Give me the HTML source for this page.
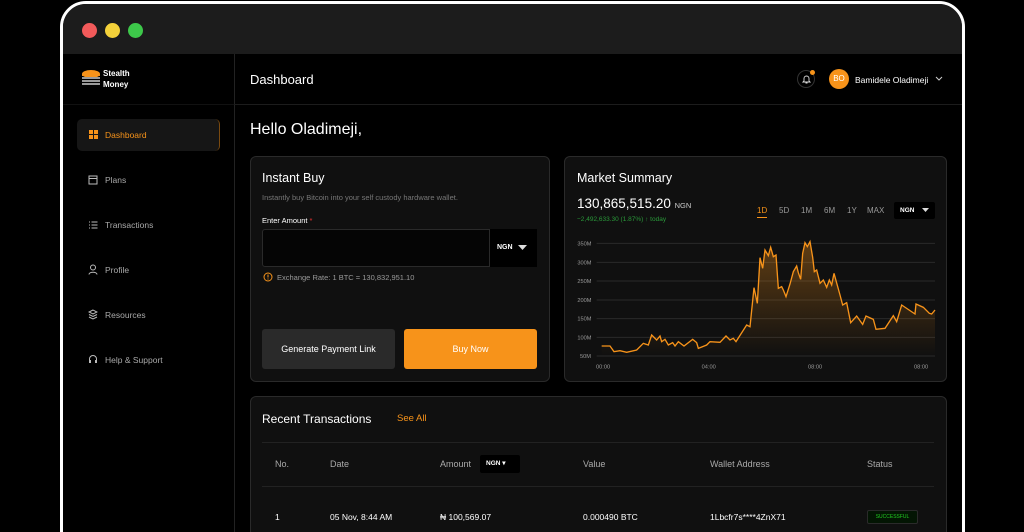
<!DOCTYPE html>
<html style="width:1024px;height:532px;overflow:hidden"><head><meta charset="utf-8"><style>
*{margin:0;padding:0;box-sizing:border-box}
body{width:1024px;height:532px;background:#000;overflow:hidden;font-family:"Liberation Sans",sans-serif;color:#fff;position:relative}
.a{position:absolute;white-space:nowrap}
.frame{position:absolute;left:60px;top:1px;width:905px;height:600px;border:3px solid #fff;border-radius:26px;background:#000;overflow:hidden}
.card{position:absolute;background:#101010;border:1px solid #2a2a2a;border-radius:6px}
.nav{position:absolute;left:105px;font-size:8.5px;color:#aaa}
.g{color:#aaa}
</style></head><body>
<div class="frame">
 <div class="a" style="left:0;top:0;width:900px;height:50px;background:#1c1c1c"></div>
 <div class="a" style="left:19px;top:19px;width:15px;height:15px;border-radius:50%;background:#f25a5a"></div>
 <div class="a" style="left:42px;top:19px;width:15px;height:15px;border-radius:50%;background:#f4d13a"></div>
 <div class="a" style="left:65px;top:19px;width:15px;height:15px;border-radius:50%;background:#3dc84a"></div>
 <div class="a" style="left:171px;top:50px;width:1px;height:560px;background:#222"></div>
 <div class="a" style="left:171px;top:100px;width:730px;height:1px;background:#1c1c1c"></div>
 <div class="a" style="left:0;top:100px;width:171px;height:1px;background:#111"></div>
</div>
<svg class="a" style="left:81px;top:68px" width="20" height="20" viewBox="0 0 20 20"><ellipse cx="10" cy="6" rx="9" ry="4" fill="#f7931a"/><rect x="1" y="6" width="18" height="2" fill="#f7931a"/><path d="M1 10h18M1 13h18M1 16h18" stroke="#999" stroke-width="2"/></svg>
<div class="a" style="left:103px;top:68px;font-size:8px;font-weight:bold;line-height:11px">Stealth<br>Money</div>
<div class="a" style="left:77px;top:119px;width:143px;height:32px;background:#161616;border-radius:5px;border-right:1px solid #7a4a10"></div>
<svg class="a" style="left:89px;top:130px" width="9" height="9"><rect width="4" height="4" fill="#f7931a"/><rect x="5" width="4" height="4" fill="#f7931a"/><rect y="5" width="4" height="4" fill="#f7931a"/><rect x="5" y="5" width="4" height="4" fill="#f7931a"/></svg>
<div class="nav" style="top:130px;color:#f7931a">Dashboard</div>
<svg class="a" style="left:88px;top:175px" width="10" height="10"><rect x="1" y="1" width="8" height="8" fill="none" stroke="#bbb"/><path d="M1 3.5h8" stroke="#bbb"/></svg>
<div class="nav" style="top:175px">Plans</div>
<svg class="a" style="left:88px;top:220px" width="10" height="10"><path d="M1 2h1M1 5h1M1 8h1M3.5 2h6M3.5 5h6M3.5 8h6" stroke="#bbb"/></svg>
<div class="nav" style="top:220px">Transactions</div>
<svg class="a" style="left:88px;top:264px" width="10" height="11"><circle cx="5" cy="3.5" r="2.5" fill="none" stroke="#bbb"/><path d="M1 10.5c0-3 8-3 8 0" fill="none" stroke="#bbb"/></svg>
<div class="nav" style="top:265px">Profile</div>
<svg class="a" style="left:88px;top:309px" width="10" height="11"><path d="M5 1L1 3l4 2 4-2zM1 5.5l4 2 4-2M1 8l4 2 4-2" fill="none" stroke="#bbb"/></svg>
<div class="nav" style="top:310px">Resources</div>
<svg class="a" style="left:88px;top:354px" width="10" height="11"><path d="M1.5 7V5a3.5 3.5 0 017 0v2" fill="none" stroke="#bbb"/><rect x="1" y="6" width="2" height="3" fill="#bbb"/><rect x="7" y="6" width="2" height="3" fill="#bbb"/></svg>
<div class="nav" style="top:355px">Help &amp; Support</div>
<div class="a" style="left:250px;top:72px;font-size:13px">Dashboard</div>
<div class="a" style="left:797px;top:70px;width:18px;height:18px;border-radius:50%;border:1px solid #333"></div>
<svg class="a" style="left:802px;top:74px" width="9" height="10"><path d="M2 7V4.5a2.5 2.5 0 015 0V7l1 1H1z M3.5 9h2" fill="none" stroke="#ddd" stroke-width="0.9"/></svg>
<div class="a" style="left:810px;top:70px;width:5px;height:5px;border-radius:50%;background:#f7931a"></div>
<div class="a" style="left:829px;top:69px;width:20px;height:20px;border-radius:50%;background:#f7931a;font-size:8px;text-align:center;line-height:20px;color:#fff">BO</div>
<div class="a" style="left:855px;top:75px;font-size:8.5px">Bamidele Oladimeji</div>
<svg class="a" style="left:935px;top:76px" width="8" height="6"><path d="M1 1l3 3 3-3" fill="none" stroke="#ccc"/></svg>
<div class="a" style="left:250px;top:121px;font-size:16px">Hello Oladimeji,</div>
<div class="card" style="left:250px;top:156px;width:300px;height:226px"></div>
<div class="a" style="left:262px;top:171px;font-size:12.5px">Instant Buy</div>
<div class="a g" style="left:262px;top:193px;font-size:7.5px;color:#777">Instantly buy Bitcoin into your self custody hardware wallet.</div>
<div class="a" style="left:262px;top:216px;font-size:7.5px">Enter Amount <span style="color:#e33">*</span></div>
<div class="a" style="left:262px;top:229px;width:275px;height:38px;background:#050505;border:1px solid #2a2a2a;border-radius:3px"></div>
<div class="a" style="left:489px;top:229px;width:48px;height:38px;background:#000;border-left:1px solid #2a2a2a"></div>
<div class="a" style="left:497px;top:244px;font-size:7px;font-weight:bold">NGN</div>
<svg class="a" style="left:518px;top:245px" width="9" height="6"><path d="M0 0h9L4.5 5z" fill="#ddd"/></svg>
<svg class="a" style="left:263px;top:272px" width="10" height="10"><circle cx="5" cy="5" r="4" fill="none" stroke="#f7931a"/><path d="M5 2.5v3M5 6.5v1" stroke="#f7931a"/></svg>
<div class="a" style="left:277px;top:273px;font-size:7.5px;color:#999">Exchange Rate: 1 BTC = 130,832,951.10</div>
<div class="a" style="left:262px;top:329px;width:133px;height:40px;background:#2a2a2a;border-radius:3px;font-size:9px;text-align:center;line-height:40px">Generate Payment Link</div>
<div class="a" style="left:404px;top:329px;width:133px;height:40px;background:#f7931a;border-radius:3px;font-size:9px;text-align:center;line-height:40px">Buy Now</div>
<div class="card" style="left:564px;top:156px;width:383px;height:226px"></div>
<div class="a" style="left:577px;top:171px;font-size:12.5px">Market Summary</div>
<div class="a" style="left:577px;top:196px;font-size:13.5px">130,865,515.20 <span style="font-size:7.5px;color:#ccc">NGN</span></div>
<div class="a" style="left:577px;top:216px;font-size:6.5px;color:#2a9a3a">−2,492,633.30 (1.87%) ↑ today</div>
<div class="a" style="left:757px;top:206px;font-size:8px;color:#f7931a;border-bottom:1px solid #f7931a;padding-bottom:2px">1D</div>
<div class="a" style="left:779px;top:206px;font-size:8px;color:#999">5D</div>
<div class="a" style="left:801px;top:206px;font-size:8px;color:#999">1M</div>
<div class="a" style="left:824px;top:206px;font-size:8px;color:#999">6M</div>
<div class="a" style="left:847px;top:206px;font-size:8px;color:#999">1Y</div>
<div class="a" style="left:867px;top:206px;font-size:8px;color:#999">MAX</div>
<div class="a" style="left:894px;top:202px;width:41px;height:17px;background:#000;border-radius:2px"></div>
<div class="a" style="left:900px;top:207px;font-size:6.5px;font-weight:bold">NGN</div>
<svg class="a" style="left:922px;top:208px" width="7" height="5"><path d="M0 0h7L3.5 4z" fill="#ddd"/></svg>
<svg class="a" style="left:560px;top:50px" width="410" height="330" viewBox="0 0 1230 990">
<defs><linearGradient id="f" x1="0" y1="0" x2="0" y2="1"><stop offset="0" stop-color="#f7931a" stop-opacity=".35"/><stop offset="1" stop-color="#f7931a" stop-opacity="0"/></linearGradient></defs>
<g stroke="#2a2a2a" stroke-width="3"><path d="M110 580H1125M110 637H1125M110 693H1125M110 750H1125M110 806H1125M110 862H1125M110 918H1125"/></g>
<g fill="#999" font-size="17" font-family="Liberation Sans"><text x="52" y="586">350M</text><text x="52" y="643">300M</text><text x="52" y="699">250M</text><text x="52" y="756">200M</text><text x="52" y="812">150M</text><text x="52" y="868">100M</text><text x="60" y="924">50M</text><text x="108" y="956">00:00</text><text x="425" y="956">04:00</text><text x="744" y="956">08:00</text><text x="1062" y="956">08:00</text></g>
<path d="M125 888 150 888 162 905 180 902 200 907 230 900 250 880 265 885 275 855 290 870 300 858 305 875 315 868 325 885 338 878 345 888 355 875 372 888 398 868 410 878 415 895 440 885 450 875 480 877 498 858 510 870 520 865 528 875 560 825 570 830 582 713 592 760 600 623 608 655 615 600 625 617 632 592 640 620 648 615 655 715 665 710 670 720 678 740 690 702 700 665 710 648 715 668 722 688 728 610 735 578 742 590 750 575 758 622 763 665 770 660 780 700 790 690 800 712 808 690 815 705 822 670 840 735 848 765 860 758 872 818 890 798 908 823 918 798 940 808 948 838 975 835 1000 797 1010 815 1025 765 1065 792 1068 762 1090 772 1108 790 1115 792 1125 780 1125 918 125 918Z" fill="url(#f)"/>
<path d="M125 888 150 888 162 905 180 902 200 907 230 900 250 880 265 885 275 855 290 870 300 858 305 875 315 868 325 885 338 878 345 888 355 875 372 888 398 868 410 878 415 895 440 885 450 875 480 877 498 858 510 870 520 865 528 875 560 825 570 830 582 713 592 760 600 623 608 655 615 600 625 617 632 592 640 620 648 615 655 715 665 710 670 720 678 740 690 702 700 665 710 648 715 668 722 688 728 610 735 578 742 590 750 575 758 622 763 665 770 660 780 700 790 690 800 712 808 690 815 705 822 670 840 735 848 765 860 758 872 818 890 798 908 823 918 798 940 808 948 838 975 835 1000 797 1010 815 1025 765 1065 792 1068 762 1090 772 1108 790 1115 792 1125 780" fill="none" stroke="#f7931a" stroke-width="4"/>
</svg>
<div class="card" style="left:250px;top:396px;width:697px;height:170px"></div>
<div class="a" style="left:262px;top:412px;font-size:12px">Recent Transactions</div>
<div class="a" style="left:397px;top:413px;font-size:9.5px;color:#f7931a">See All</div>
<div class="a" style="left:262px;top:442px;width:672px;height:1px;background:#222"></div>
<div class="a" style="left:262px;top:486px;width:672px;height:1px;background:#222"></div>
<div class="a g" style="left:275px;top:459px;font-size:9px">No.</div>
<div class="a g" style="left:330px;top:459px;font-size:9px">Date</div>
<div class="a g" style="left:440px;top:459px;font-size:9px">Amount</div>
<div class="a" style="left:480px;top:455px;width:40px;height:18px;background:#000;border-radius:2px;font-size:6.5px;font-weight:bold;line-height:18px;padding-left:6px">NGN ▾</div>
<div class="a g" style="left:583px;top:459px;font-size:9px">Value</div>
<div class="a g" style="left:710px;top:459px;font-size:9px">Wallet Address</div>
<div class="a g" style="left:867px;top:459px;font-size:9px">Status</div>
<div class="a" style="left:275px;top:512px;font-size:8.5px">1</div>
<div class="a" style="left:330px;top:512px;font-size:8.5px">05 Nov, 8:44 AM</div>
<div class="a" style="left:440px;top:512px;font-size:8.5px">₦ 100,569.07</div>
<div class="a" style="left:583px;top:512px;font-size:8.5px">0.000490 BTC</div>
<div class="a" style="left:710px;top:512px;font-size:8.5px">1Lbcfr7s****4ZnX71</div>
<div class="a" style="left:867px;top:510px;width:51px;height:14px;background:#031503;border:1px solid #2a2a2a;border-radius:2px;font-size:5px;color:#2c2;text-align:center;line-height:12px">SUCCESSFUL</div>
</body></html>
